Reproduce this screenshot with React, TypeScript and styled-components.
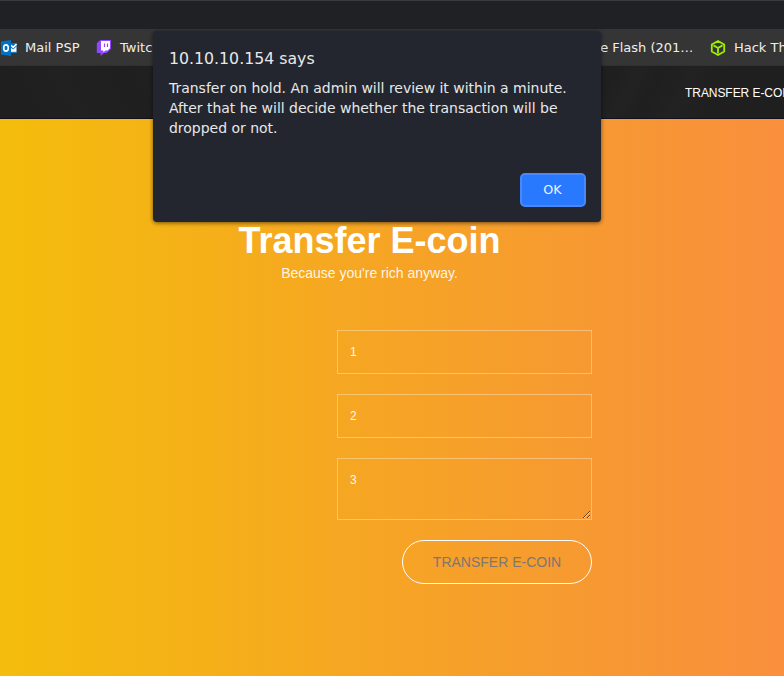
import React from "react";
import styled, { createGlobalStyle } from "styled-components";

const GlobalStyle = createGlobalStyle`
  * { box-sizing: border-box; }
  body { margin: 0; overflow: hidden; }
  p, h1, h2 { margin: 0; }
`;

const Window = styled.div`
  position: relative;
  width: 784px;
  height: 676px;
  display: flex;
  flex-direction: column;
  overflow: hidden;
  font-family: "Liberation Sans", Arial, sans-serif;
`;

const Toolbar = styled.div`
  flex: none;
  height: 29px;
  background: #202124;
  border-top: 1px solid #393b3c;
`;

const BookmarkBar = styled.nav`
  flex: none;
  height: 37px;
  display: flex;
  align-items: center;
  justify-content: space-between;
  padding-top: 2px;
  background: #353535;
  color: #eeeeee;
  font: 13px/18px "DejaVu Sans", sans-serif;
  border-bottom: 1px solid #303030;
`;

const BookmarkGroup = styled.div<{ $end?: boolean }>`
  display: flex;
  gap: 16.6px;
  padding-left: 1px;
  margin-right: ${(p) => (p.$end ? "-39px" : "0")};
`;

const Bookmark = styled.span`
  display: flex;
  align-items: center;
  gap: 8px;
  white-space: nowrap;
  svg { display: block; flex: none; }
`;

const SiteHeader = styled.header`
  flex: none;
  height: 53px;
  display: flex;
  align-items: center;
  padding: 2px 0 0 685px;
  background:
    linear-gradient(118deg, transparent 76%, #222222 79%, transparent 82%, #222222 86%, transparent 90%),
    linear-gradient(62deg, #1f1f1f 4%, #212121 10%, #1f1f1f 18%, #212121 24%, #1f1f1f 30%);
  border-bottom: 1px solid #10101c;
`;

const NavLink = styled.span`
  color: #ffffff;
  font-size: 12px;
  letter-spacing: -0.06px;
  line-height: 18px;
  white-space: nowrap;
`;

const Main = styled.main`
  flex: 1;
  display: flex;
  flex-direction: column;
  align-items: flex-start;
  padding-top: 101px;
  background: linear-gradient(90deg, #f4bd0c 0%, #f6a425 50%, #f79734 80%, #fa8f3d 100%);
`;

const Heading = styled.div`
  width: 739px;
  text-align: center;
  color: #ffffff;
`;

const Title = styled.h1`
  font-size: 36px;
  line-height: 41px;
`;

const Subtitle = styled.p`
  margin-top: 2px;
  font-size: 14px;
  line-height: 20px;
  color: rgba(255, 255, 255, 0.9);
`;

const Form = styled.form`
  width: 255px;
  margin: 47px 0 0 337px;
  display: flex;
  flex-direction: column;
  gap: 20px;
`;

const fieldStyle = `
  display: block;
  width: 100%;
  margin: 0;
  padding: 12px;
  border: 1px solid rgba(255, 255, 255, 0.35);
  border-radius: 0;
  outline: none;
  background: transparent;
  color: #fff8e6;
  font: 12px/17px "Liberation Sans", Arial, sans-serif;
`;

const Field = styled.input`
  ${fieldStyle}
  height: 44px;
`;

const Message = styled.textarea`
  ${fieldStyle}
  height: 62px;
  padding-top: 13px;
  resize: both;
  overflow: auto;
`;

const SubmitButton = styled.button`
  align-self: flex-end;
  width: 190px;
  height: 44px;
  padding: 0;
  border: 1px solid #ffffff;
  border-radius: 22px;
  background: transparent;
  color: #7c7772;
  font: 14px/20px "Liberation Sans", Arial, sans-serif;
`;

const Dialog = styled.section`
  position: absolute;
  top: 31px;
  left: 153px;
  width: 448px;
  height: 191px;
  display: flex;
  flex-direction: column;
  padding: 17px 15px 15px 16px;
  border-radius: 4px;
  background: #23262f;
  box-shadow: 0 1px 4px rgba(0, 0, 0, 0.55);
  color: #e8e8e8;
  font-family: "DejaVu Sans", sans-serif;
`;

const DialogTitle = styled.h2`
  font-size: 15.75px;
  font-weight: 400;
  line-height: 21px;
`;

const DialogText = styled.p`
  margin-top: 9px;
  font-size: 14px;
  letter-spacing: -0.02px;
  line-height: 20px;
  white-space: nowrap;
`;

const OkButton = styled.button`
  width: 66px;
  height: 34px;
  margin-top: auto;
  align-self: flex-end;
  padding: 0 1px 0 0;
  border: 2px solid #4888fb;
  border-radius: 5px;
  background: #2979ff;
  color: #eef4ff;
  font: 12.7px/18px "DejaVu Sans", sans-serif;
`;

const OutlookIcon = () => (
  <svg width="16" height="16" viewBox="0 0 16 16">
    <path d="M9 3.5h6.5v9H9z" fill="#fff" />
    <path d="M9 3h7v3L12.2 9.6 9 7z" fill="#0072c6" />
    <path d="m10 5.2 2.2 2.2L15.5 4" fill="none" stroke="#fff" strokeWidth="1.6" />
    <path d="M9 12.3h7" stroke="#0072c6" />
    <path d="M0 1.5 10 0v16L0 14.5z" fill="#0072c6" />
    <ellipse cx="5" cy="8" rx="2.3" ry="3.1" fill="none" stroke="#fff" strokeWidth="1.6" />
  </svg>
);

const TwitchIcon = () => (
  <svg width="16" height="16" viewBox="0 0 16 16">
    <path d="M4.3 0 .8 3.2v9.8H4.6v3L8 13h2.7L15 8.7V0z" fill="#9146ff" />
    <path d="M5 1h9v7.2l-2.4 2.4H9.4L7.4 12.4v-1.8H5z" fill="#fff" />
    <path d="M8.5 3.5v3.5M11.5 3.5v3.5" stroke="#9146ff" strokeWidth="1.2" />
  </svg>
);

const CubeIcon = () => (
  <svg width="16" height="16" viewBox="0 0 16 16" fill="none" stroke="#9fef00" strokeWidth="1.8" strokeLinejoin="round">
    <path d="m8 1 6.2 3.5v7L8 15l-6.2-3.5v-7z" />
    <path d="M3.5 5.4 8 8l4.5-2.6M8 8v5.5" />
  </svg>
);

export default function App() {
  return (
    <Window>
      <GlobalStyle />
      <Toolbar />
      <BookmarkBar>
        <BookmarkGroup>
          <Bookmark><OutlookIcon />Mail PSP</Bookmark>
          <Bookmark><TwitchIcon />Twitch</Bookmark>
        </BookmarkGroup>
        <BookmarkGroup $end>
          <Bookmark>The Flash (201…</Bookmark>
          <Bookmark><CubeIcon />Hack The Box</Bookmark>
        </BookmarkGroup>
      </BookmarkBar>
      <SiteHeader><NavLink>TRANSFER E-COIN</NavLink></SiteHeader>
      <Main>
        <Heading>
          <Title>Transfer E-coin</Title>
          <Subtitle>Because you're rich anyway.</Subtitle>
        </Heading>
        <Form onSubmit={(e) => e.preventDefault()}>
          <Field defaultValue="1" />
          <Field defaultValue="2" />
          <Message defaultValue="3" />
          <SubmitButton disabled>TRANSFER E-COIN</SubmitButton>
        </Form>
      </Main>
      <Dialog role="dialog">
        <DialogTitle>10.10.10.154 says</DialogTitle>
        <DialogText>
          Transfer on hold. An admin will review it within a minute.<br />
          After that he will decide whether the transaction will be<br />
          dropped or not.
        </DialogText>
        <OkButton>OK</OkButton>
      </Dialog>
    </Window>
  );
}
